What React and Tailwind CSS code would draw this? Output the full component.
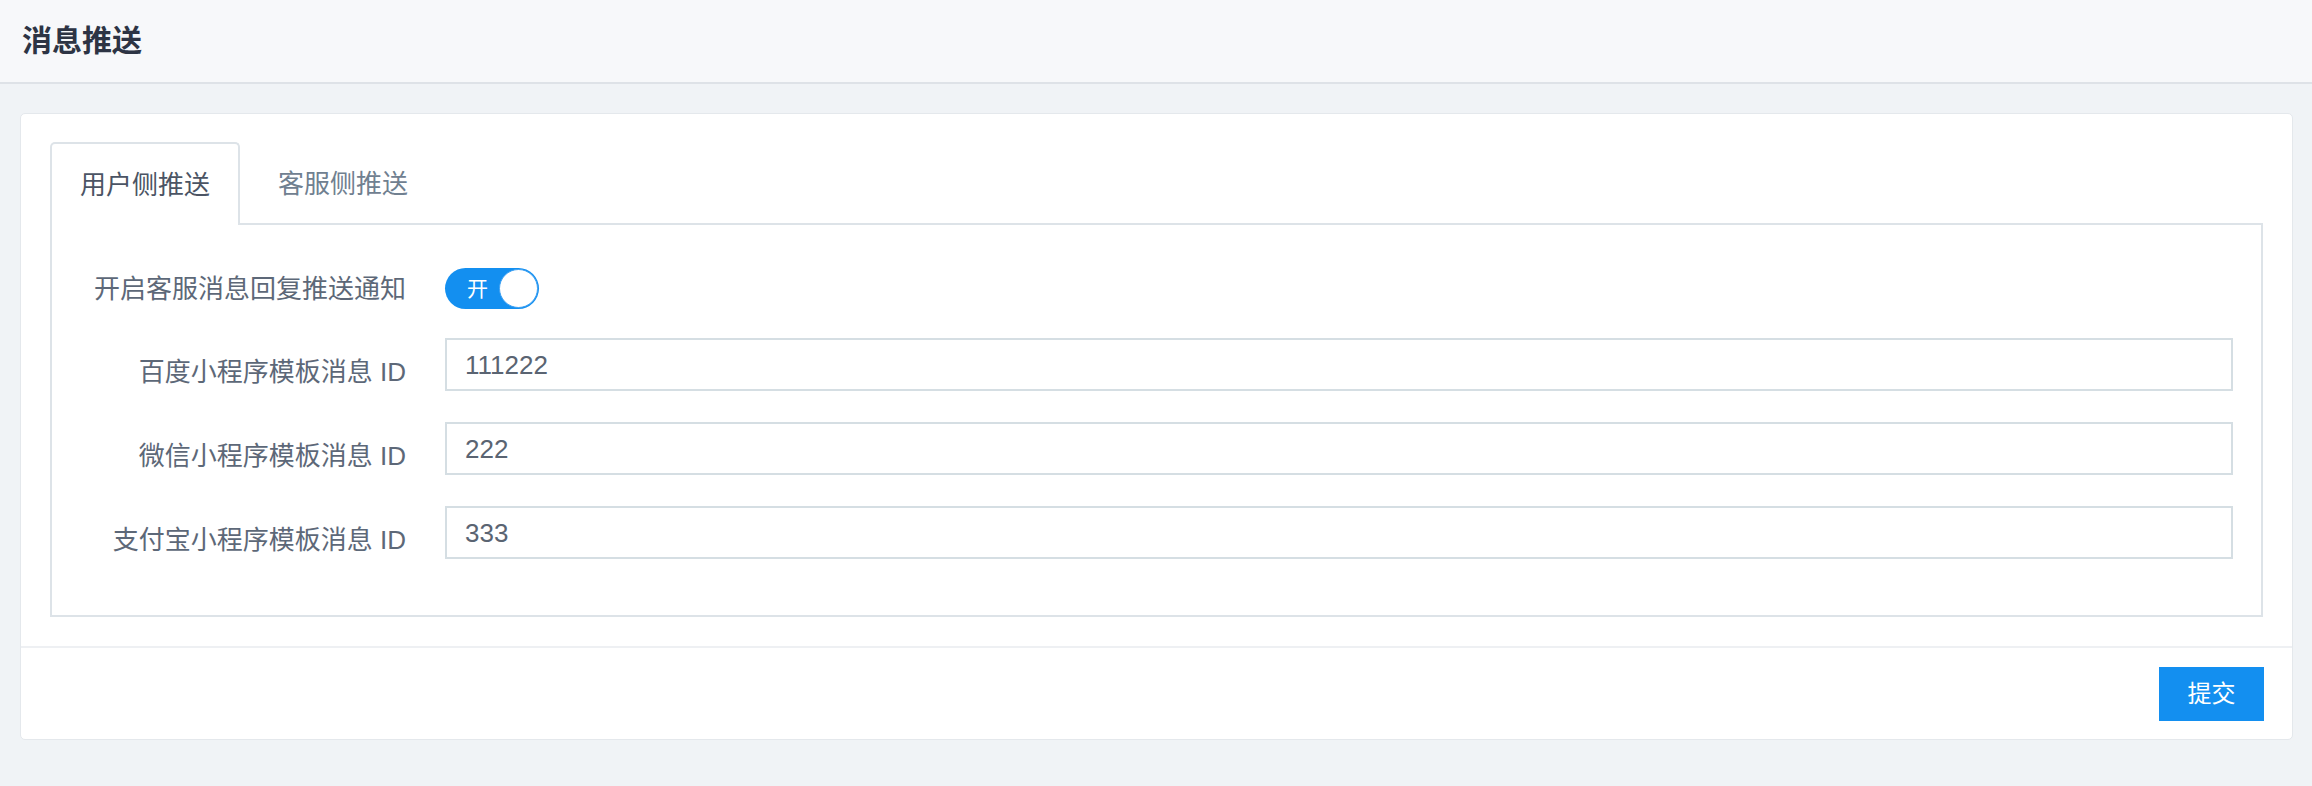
import React from "react";

const rows = [
  { label: "百度小程序模板消息 ID", value: "111222" },
  { label: "微信小程序模板消息 ID", value: "222" },
  { label: "支付宝小程序模板消息 ID", value: "333" },
];

export default function App() {
  return (
    <div className="min-h-[786px] bg-[#f0f3f6] font-['Liberation_Sans','Noto_Sans_CJK_SC',sans-serif]">
      <header className="h-[84px] bg-[#f7f8fa] border-b-2 border-[#dee2e7] flex items-center pl-[22px]">
        <h1 className="text-[30px] leading-[36px] font-bold text-[#2d3444]">消息推送</h1>
      </header>

      <div className="pt-[29px] pl-[20px] pr-[19px]">
        <div className="bg-white rounded-[5px] border border-[#e4e8ec]">
          <div className="pt-[28px] px-[29px] pb-[29px]">
            <div className="flex items-end -mb-[2px]">
              <div className="relative z-10 h-[83px] px-[28px] border-2 border-b-0 border-[#dde3e8] rounded-t-[5px] bg-white flex items-center text-[26px] leading-[26px] text-[#4b5464]">
                用户侧推送
              </div>
              <div className="ml-[8px] h-[83px] px-[28px] border-2 border-transparent flex items-center text-[26px] leading-[26px] text-[#708090]">
                客服侧推送
              </div>
            </div>

            <div className="border-2 border-[#dde3e8] pt-[43px] pb-[56px] pr-[28px]">
              <div className="flex items-center h-[41px] mb-[29px]">
                <div className="w-[354px] shrink-0 text-right text-[26px] leading-[26px] text-[#5d6878]">
                  开启客服消息回复推送通知
                </div>
                <div className="ml-[39px] w-[94px] h-[41px] rounded-full bg-[#138ff0] flex items-center justify-between pl-[22px] pr-[1px]">
                  <span className="text-white text-[21px] leading-[21px]">开</span>
                  <span className="w-[39px] h-[39px] rounded-full bg-white border border-[#3ea0f2]"></span>
                </div>
              </div>

              <div className="flex flex-col gap-[31px]">
                {rows.map((r) => (
                  <div key={r.label} className="flex items-start">
                    <div className="w-[354px] shrink-0 text-right text-[26px] leading-[26px] text-[#5d6878] pt-[21px]">
                      {r.label}
                    </div>
                    <div className="ml-[39px] flex-1 h-[53px] border-2 border-[#d5dee3] flex items-center px-[18px] text-[26px] leading-[26px] text-[#5a6472]">
                      {r.value}
                    </div>
                  </div>
                ))}
              </div>
            </div>
          </div>

          <div className="border-t-2 border-[#eef0f3] flex justify-end pt-[19px] pb-[18px] pr-[28px]">
            <button className="w-[105px] h-[54px] bg-[#138ff0] text-white text-[24px] leading-[24px] flex items-center justify-center">
              提交
            </button>
          </div>
        </div>
      </div>
    </div>
  );
}
